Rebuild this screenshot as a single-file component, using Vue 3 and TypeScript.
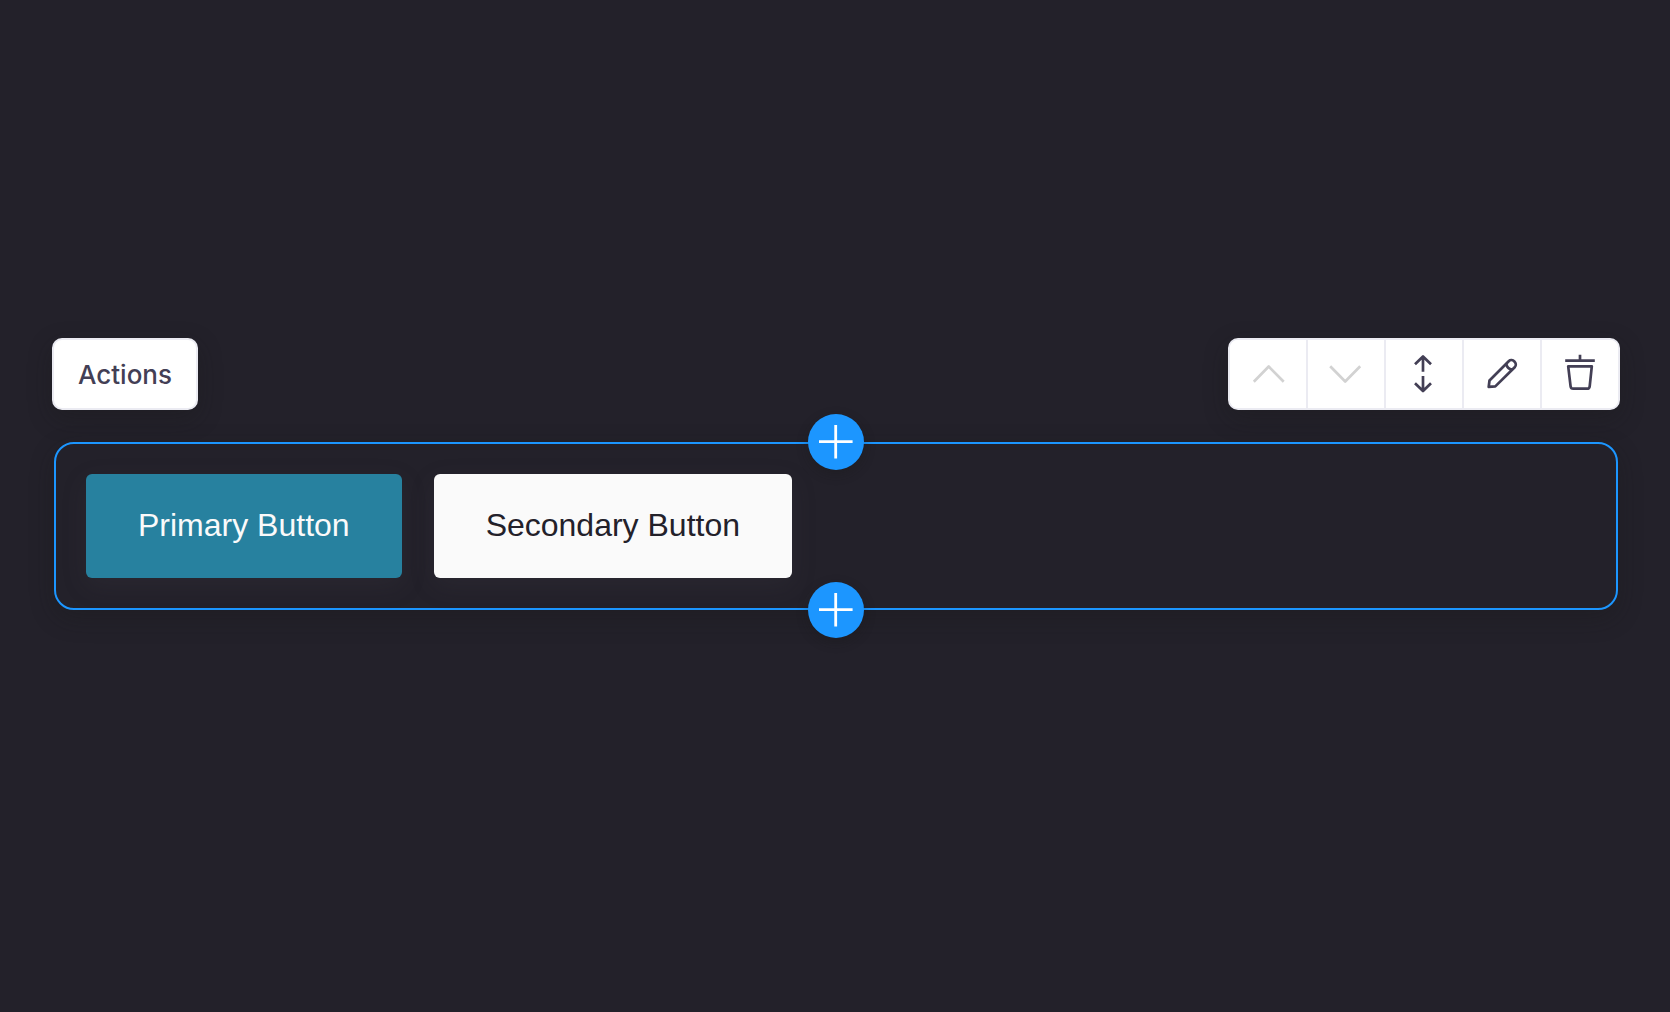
<script setup lang="ts">
interface Tool {
  label: string
  paths: string[]
  disabled?: boolean
}

const tools: Tool[] = [
  { label: 'Move up', disabled: true, paths: ['M5.800 29.700 20.700 14.500 35.700 29.700'] },
  { label: 'Move down', disabled: true, paths: ['M4.200 14.200 19.200 29.500 34.200 14.200'] },
  {
    label: 'Drag to move',
    paths: ['M19 19.700V4.500M11 12.300 19 4.500 27 12.300', 'M19 24V39M11 31.200 19 39 27 31.200'],
  },
  {
    label: 'Edit',
    paths: [
      'M6.700 34.900 7.500 28.500 26.700 9.200C30.300 5.700 36.300 11.500 32.700 15.200L13.300 34.400Z',
      'M24.200 11.800Q25 16.700 30.200 17.700',
    ],
  },
  {
    label: 'Delete',
    paths: ['M5.200 8.700H34.800M20 2.700V8.700', 'M8.200 14.300H31.800L29.700 34.300Q29.400 36.700 27 36.700H13.200Q10.900 36.700 10.600 34.300Z'],
  },
]

const insertPoints = [
  { side: 'before', label: 'Add block above' },
  { side: 'after', label: 'Add block below' },
]
</script>

<template>
  <main class="canvas">
    <section class="block" aria-label="Actions block">
      <header class="block-header">
        <div class="block-name">Actions</div>
        <div class="toolbar" role="toolbar" aria-label="Block tools">
          <button
            v-for="tool in tools"
            :key="tool.label"
            class="tool"
            type="button"
            :aria-label="tool.label"
            :disabled="tool.disabled"
          >
            <svg viewBox="0 0 40 44" aria-hidden="true">
              <path v-for="d in tool.paths" :key="d" :d="d" />
            </svg>
          </button>
        </div>
      </header>
      <div class="frame">
        <button class="action primary" type="button">Primary Button</button>
        <button class="action secondary" type="button">Secondary Button</button>
        <button
          v-for="point in insertPoints"
          :key="point.side"
          class="insert"
          :class="point.side"
          type="button"
          :aria-label="point.label"
        >
          <svg viewBox="0 0 56 56" aria-hidden="true"><path d="M11 27.700H44.600M27.700 11V44.600" /></svg>
        </button>
      </div>
    </section>
  </main>
</template>

<style>
body {
  margin: 0;
  background: #23212a;
}
</style>

<style scoped>
.canvas {
  box-sizing: border-box;
  min-height: 100vh;
  padding: 338px 50px 64px 52px;
  background: #23212a;
  font-family: Inter, sans-serif;
}

.block-header {
  display: flex;
  justify-content: space-between;
  margin-bottom: 32px;
}

.block-name,
.toolbar {
  box-sizing: border-box;
  height: 72px;
  border: 2px solid #ebebf2;
  border-radius: 10px;
  background: #fff;
  box-shadow: 0 8px 24px rgba(24, 26, 24, 0.32);
}

.block-name {
  padding: 0 24px;
  color: #433f55;
  font-size: 26px;
  font-weight: 500;
  line-height: 70px;
}

.toolbar {
  display: flex;
  overflow: hidden;
}

.tool {
  display: flex;
  align-items: center;
  justify-content: center;
  box-sizing: content-box;
  width: 76px;
  padding: 0;
  border: 0;
  background: #fff;
  color: #433f55;
}

.tool + .tool {
  border-left: 2px solid #ebebf2;
}

.tool:disabled {
  color: #d2d2d2;
}

.tool svg {
  width: 40px;
  height: 44px;
  fill: none;
  stroke: currentColor;
  stroke-width: 2.7;
  stroke-linejoin: round;
}

.frame {
  position: relative;
  display: flex;
  gap: 32px;
  margin: 0 2px;
  padding: 30px;
  border: 2px solid #1c96ff;
  border-radius: 20px;
  box-shadow: 0 8px 24px rgba(24, 26, 24, 0.32);
  background: #23212a;
}

.action {
  height: 104px;
  padding: 0 52px 2px;
  border: 0;
  border-radius: 6px;
  box-shadow: 0 8px 24px rgba(70, 65, 75, 0.2);
  font-family: "Liberation Sans", Arial, sans-serif;
  font-size: 32px;
}

.primary {
  background: #27819f;
  color: #fafafa;
}

.secondary {
  background: #fafafa;
  color: #23212a;
}

.insert {
  position: absolute;
  left: 50%;
  width: 56px;
  height: 56px;
  padding: 0;
  border: 0;
  border-radius: 50%;
  background: #1c96ff;
  box-shadow: 0 4px 12px rgba(24, 26, 24, 0.32);
  transform: translateX(-50%);
}

.before {
  top: -30px;
}

.after {
  bottom: -30px;
}

.insert svg {
  display: block;
  fill: none;
  stroke: #fff;
  stroke-width: 2.8;
}
</style>
